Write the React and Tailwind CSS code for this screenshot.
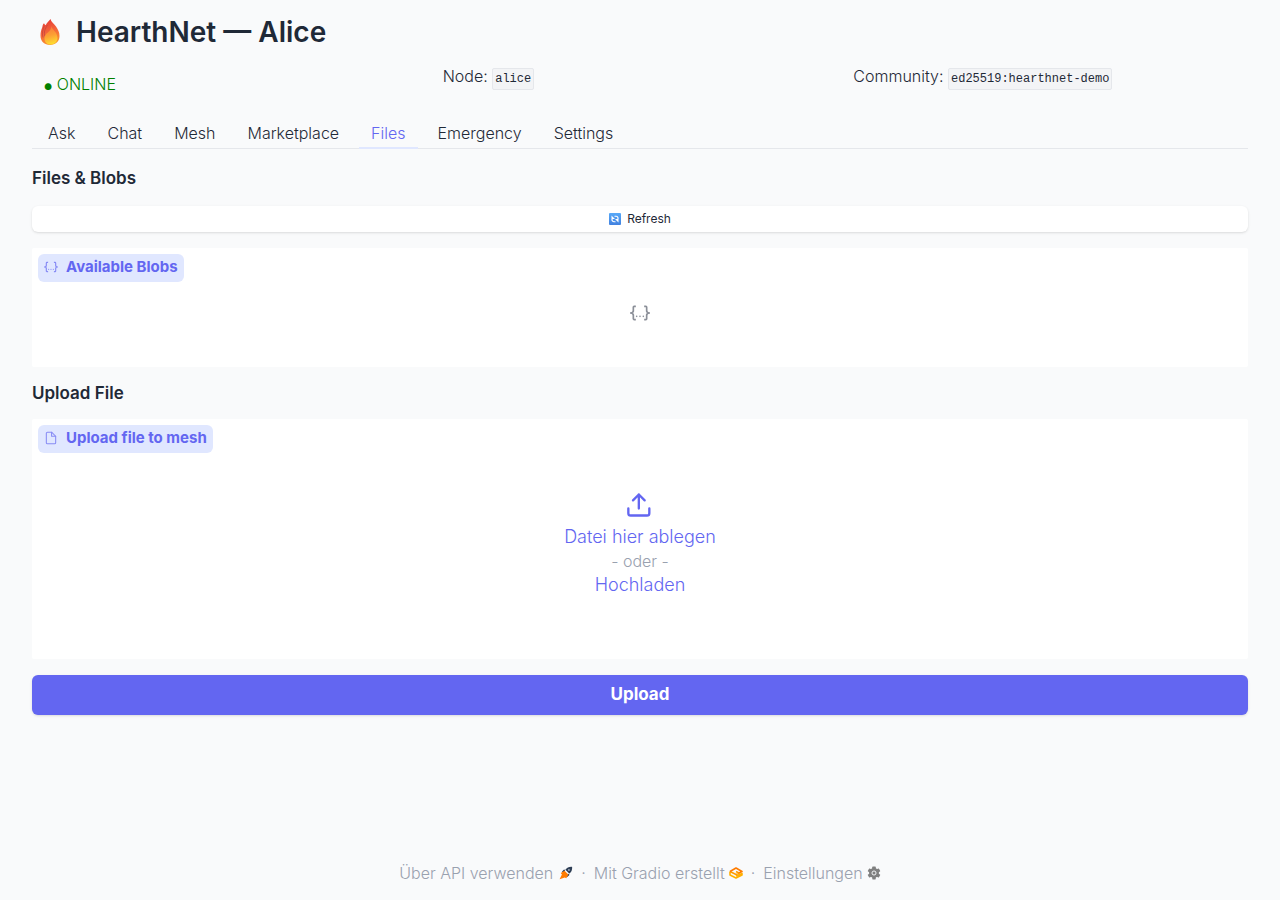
import React, { useState } from 'react';

const tabs = ['Ask', 'Chat', 'Mesh', 'Marketplace', 'Files', 'Emergency', 'Settings'];

function FlameIcon() {
  return (
    <svg viewBox="0 0 22 28" className="w-6 h-7 shrink-0" aria-hidden="true">
      <defs>
        <linearGradient id="flame" x1="0.3" y1="0" x2="0.6" y2="1">
          <stop offset="0" stopColor="#e53935" />
          <stop offset="0.5" stopColor="#f4663a" />
          <stop offset="1" stopColor="#fb9a2c" />
        </linearGradient>
        <linearGradient id="flameCore" x1="0.4" y1="0" x2="0.6" y2="1">
          <stop offset="0" stopColor="#f9783a" />
          <stop offset="0.5" stopColor="#fca034" />
          <stop offset="1" stopColor="#fee02f" />
        </linearGradient>
      </defs>
      <path d="M11.500 1c.5 3 3.500 4.500 5.500 7.500 2 3 3.500 5.500 3.500 9.500 0 5.500-4 9-9.500 9S1.500 23.500 1.500 17.500c0-3.500.7-5.500 1.700-8C3.700 8 3.500 6.500 5 5.200 5.400 6 6 6.800 6.700 7.200 7.500 5 9.500 3.500 11.500 1z" fill="url(#flame)" />
      <path d="M5 8c-.8 4-2.500 6-1 11.500M8.500 7C6 11 4.500 14 6 18.500" fill="none" stroke="#c9483f" strokeWidth="0.900" />
      <path d="M12.500 8c.5 4 6 6 6 12 0 3.800-3 6.500-7 6.500S5.500 24 5.500 20.500c0-4 3-5.500 4.500-7 1.200-1.300 2.300-3 2.500-5.500z" fill="url(#flameCore)" />
    </svg>
  );
}

function RefreshIcon() {
  return (
    <svg viewBox="0 0 24 24" className="w-3 h-3" aria-hidden="true">
      <defs>
        <linearGradient id="tile" x1="0" y1="0" x2="0" y2="1">
          <stop offset="0" stopColor="#58a9f8" />
          <stop offset="1" stopColor="#4181df" />
        </linearGradient>
      </defs>
      <rect width="24" height="24" rx="2" fill="url(#tile)" />
      <path d="M11 6.500h3a4 4 0 0 1 4 4V12M13 17.500h-3a4 4 0 0 1-4-4V12" fill="none" stroke="#fff" strokeWidth="2.400" />
      <path d="M5 5v7h7zM19 19v-7h-7z" fill="#fff" />
    </svg>
  );
}

function JsonIcon({ className }) {
  return (
    <svg viewBox="0 0 24 24" fill="currentColor" className={className} aria-hidden="true">
      <path d="M5 3h2v2H5v5a2 2 0 0 1-2 2 2 2 0 0 1 2 2v5h2v2H5c-1.070-.27-2-.9-2-2v-4a2 2 0 0 0-2-2H0v-2h1a2 2 0 0 0 2-2V5a2 2 0 0 1 2-2m14 0a2 2 0 0 1 2 2v4a2 2 0 0 0 2 2h1v2h-1a2 2 0 0 0-2 2v4a2 2 0 0 1-2 2h-2v-2h2v-5a2 2 0 0 1 2-2 2 2 0 0 1-2-2V5h-2V3h2m-7 12a1 1 0 0 1 1 1 1 1 0 0 1-1 1 1 1 0 0 1-1-1 1 1 0 0 1 1-1m-4 0a1 1 0 0 1 1 1 1 1 0 0 1-1 1 1 1 0 0 1-1-1 1 1 0 0 1 1-1m8 0a1 1 0 0 1 1 1 1 1 0 0 1-1 1 1 1 0 0 1-1-1 1 1 0 0 1 1-1z" />
    </svg>
  );
}

function FileIcon() {
  return (
    <svg viewBox="0 0 24 24" fill="none" stroke="currentColor" strokeWidth="1.800" strokeLinecap="round" strokeLinejoin="round" className="w-3.5 h-3.5 opacity-70" aria-hidden="true">
      <path d="M13 2H6a2 2 0 0 0-2 2v16a2 2 0 0 0 2 2h12a2 2 0 0 0 2-2V9z" />
      <path d="M13 2v7h7" />
    </svg>
  );
}

function UploadIcon() {
  return (
    <svg viewBox="0 0 24 24" fill="none" stroke="currentColor" strokeWidth="2" strokeLinecap="round" strokeLinejoin="round" className="w-7 h-7" aria-hidden="true">
      <path d="M20 15v4a2 2 0 0 1-2 2H4a2 2 0 0 1-2-2v-4" />
      <path d="M16 8l-5-5-5 5M11 3v12" />
    </svg>
  );
}

function RocketIcon() {
  return (
    <svg viewBox="0 0 24 24" className="w-3.5 h-3.5" aria-hidden="true">
      <path d="M22.500 1.500c-5-.5-9 1.500-11.500 5l6.500 6.500c3.500-2.500 5.500-6.500 5-11.500z" fill="#2f3f56" />
      <path d="M11 6.500 8 6.500 5 10l3 1zM17.500 13v3L14 19l-1-3z" fill="#2f3f56" />
      <path d="M9.500 8 3 12l2 2.500-4 8 9-3 2.500 1.500L16 14.500z" fill="#ff7c00" />
      <circle cx="17" cy="7" r="1.300" fill="#f9fafb" />
    </svg>
  );
}

function GradioIcon() {
  return (
    <svg viewBox="0 0 28 24" className="w-3.5 h-3" fill="none" strokeWidth="3.200" strokeLinejoin="round" aria-hidden="true">
      <path d="M2 9v7l12 6 12-6v-3l-12 5" stroke="#ffb000" />
      <path d="M2 9l12 6 6-3-6-3" stroke="#ff9c00" />
      <path d="M2 9l12-7 12 7-6 3" stroke="#ff7c00" />
    </svg>
  );
}

function GearIcon() {
  return (
    <svg viewBox="0 0 24 24" className="w-3.5 h-3.5" aria-hidden="true">
      <g fill="#808080">
        <circle cx="12" cy="12" r="8.500" />
        <rect x="9" y="1" width="6" height="22" rx="1" />
        <rect x="9" y="1" width="6" height="22" rx="1" transform="rotate(60 12 12)" />
        <rect x="9" y="1" width="6" height="22" rx="1" transform="rotate(120 12 12)" />
      </g>
      <circle cx="12" cy="12" r="3.500" fill="none" stroke="#f9fafb" strokeWidth="1.600" />
    </svg>
  );
}

function Code({ children }) {
  return (
    <code className="inline-block px-0.5 border border-gray-200 rounded-xs bg-gray-100 text-xs leading-5 font-normal font-['Liberation_Mono',monospace]">
      {children}
    </code>
  );
}

function BlockLabel({ icon, children }) {
  return (
    <div className="absolute top-1.5 left-1.5 flex items-center gap-2 h-7 px-1.5 pb-0.5 rounded-md bg-[#e0e7ff] text-[#6366f1] text-[15px] font-bold">
      {icon}
      <span>{children}</span>
    </div>
  );
}

export default function App() {
  const [active, setActive] = useState('Files');

  return (
    <div className="min-h-screen flex flex-col px-8 bg-[#f9fafb] text-[#1f2937] font-[Inter,sans-serif]">
      <header className="flex items-center gap-3.5 pt-4 pl-1.5">
        <FlameIcon />
        <h1 className="text-[28px] leading-8 font-semibold">HearthNet — Alice</h1>
      </header>

      <div className="grid grid-cols-3 gap-4 mt-4 h-14 text-base leading-6 font-light">
        <div className="px-3 py-2 text-[#008000]"><span className="text-[9px]">●</span> ONLINE</div>
        <div>Node: <Code>alice</Code></div>
        <div>Community: <Code>ed25519:hearthnet-demo</Code></div>
      </div>

      <nav role="tablist" className="flex gap-2 pl-1 h-[33px] -mt-1 mb-4 border-b border-gray-200">
        {tabs.map((tab) => (
          <button
            key={tab}
            role="tab"
            aria-selected={tab === active}
            onClick={() => setActive(tab)}
            className={`px-3 h-[33px] pt-0.5 text-base font-light border-b-2 cursor-pointer ${tab === active ? 'text-[#6366f1] border-[#e0e7ff]' : 'border-transparent'}`}
          >
            {tab}
          </button>
        ))}
      </nav>

      <main className="flex flex-col gap-4 pt-px">
        <h2 className="text-[17px] leading-6 font-semibold">Files &amp; Blobs</h2>
        <button className="flex items-center justify-center gap-1.5 h-6.5 rounded-md bg-white text-xs shadow cursor-pointer">
          <RefreshIcon />
          Refresh
        </button>
        <section className="relative flex items-center justify-center h-[119px] pt-2.5 rounded-xs bg-white text-[#8b8f98]">
          <BlockLabel icon={<JsonIcon className="w-3.5 h-3.5 opacity-70" />}>Available Blobs</BlockLabel>
          <JsonIcon className="w-5 h-5" />
        </section>

        <h2 className="text-[17px] leading-5 font-semibold">Upload File</h2>
        <section className="relative h-60 rounded-xs bg-white">
          <BlockLabel icon={<FileIcon />}>Upload file to mesh</BlockLabel>
          <label className="flex flex-col items-center justify-center h-full pt-2.5 text-lg leading-6 text-[#6366f1] font-light cursor-pointer">
            <UploadIcon />
            <span className="mt-1.5">Datei hier ablegen</span>
            <span className="text-base leading-6 text-gray-400">- oder -</span>
            <span>Hochladen</span>
            <input type="file" className="sr-only" />
          </label>
        </section>
        <button className="h-10 rounded-md bg-[#6366f1] text-white text-[17px] font-bold shadow cursor-pointer">Upload</button>
      </main>

      <footer className="flex items-center justify-center gap-2 mt-auto pb-[15px] text-base leading-6 font-light text-gray-400">
        <a href="#api" className="flex items-center gap-1.5">Über API verwenden <RocketIcon /></a>
        <span>·</span>
        <a href="#gradio" className="flex items-center gap-1">Mit Gradio erstellt <GradioIcon /></a>
        <span>·</span>
        <a href="#settings" className="flex items-center gap-1">Einstellungen <GearIcon /></a>
      </footer>
    </div>
  );
}
